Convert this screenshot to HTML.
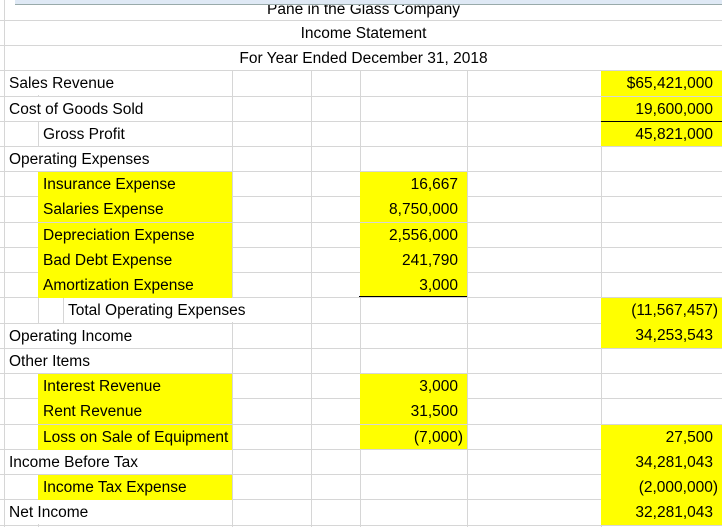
<!DOCTYPE html>
<html><head><meta charset="utf-8"><style>
body{margin:0;width:722px;height:527px;overflow:hidden;background:#fff;position:relative;font-family:"Liberation Sans",Arial,sans-serif;font-size:15.5px;color:#000}
.h{position:absolute;left:0;width:722px;height:1px;background:#d6d6d6}
.v{position:absolute;top:0;height:527px;width:1px;background:#d6d6d6}
.c{position:absolute;height:25px;line-height:25px;white-space:nowrap;box-sizing:border-box}
.w{background:#fff;height:24px}.y{background:#ffff00}
.r{text-align:right}
</style></head><body>
<div class="v" style="left:4px"></div><div class="v" style="left:38px"></div><div class="v" style="left:232px"></div><div class="v" style="left:311px"></div><div class="v" style="left:360px"></div><div class="v" style="left:467px"></div><div class="v" style="left:601px"></div>
<div class="h" style="top:20px"></div><div class="h" style="top:45px"></div><div class="h" style="top:70px"></div><div class="h" style="top:96px"></div><div class="h" style="top:121px"></div><div class="h" style="top:146px"></div><div class="h" style="top:171px"></div><div class="h" style="top:196px"></div><div class="h" style="top:222px"></div><div class="h" style="top:247px"></div><div class="h" style="top:272px"></div><div class="h" style="top:297px"></div><div class="h" style="top:323px"></div><div class="h" style="top:348px"></div><div class="h" style="top:373px"></div><div class="h" style="top:398px"></div><div class="h" style="top:424px"></div><div class="h" style="top:449px"></div><div class="h" style="top:474px"></div><div class="h" style="top:499px"></div><div class="h" style="top:525px"></div>

<div class="c w" style="left:5px;width:717px;top:0;height:20px;line-height:20px;text-align:center;overflow:hidden"><span style="position:relative;top:0px">Pane in the Glass Company</span></div>
<div style="position:absolute;left:15px;top:0;width:707px;height:4px;background:#dfe9f5;border-bottom:1px solid #9aa"></div>
<div class="c w" style="left:5px;width:717px;top:21px;text-align:center">Income Statement</div>
<div class="c w" style="left:5px;width:717px;top:46px;text-align:center">For Year Ended December 31, 2018</div>

<div class="c w" style="left:5px;width:227px;top:71px;padding-left:4px">Sales Revenue</div>
<div class="c w" style="left:5px;width:227px;top:97px;padding-left:4px">Cost of Goods Sold</div>
<div class="c w" style="left:39px;width:193px;top:122px;padding-left:4px">Gross Profit</div>
<div class="c w" style="left:5px;width:227px;top:147px;padding-left:4px">Operating Expenses</div>
<div class="c y" style="left:38px;width:194px;top:172px;padding-left:5px">Insurance Expense</div>
<div class="c y" style="left:38px;width:194px;top:197px;padding-left:5px">Salaries Expense</div>
<div class="c y" style="left:38px;width:194px;top:223px;padding-left:5px">Depreciation Expense</div>
<div class="c y" style="left:38px;width:194px;top:248px;padding-left:5px">Bad Debt Expense</div>
<div class="c y" style="left:38px;width:194px;top:273px;padding-left:5px">Amortization Expense</div>
<div class="v" style="left:63px;top:298px;height:25px"></div>
<div class="c w" style="left:64px;width:246px;top:298px;padding-left:4px">Total Operating Expenses</div>
<div class="c w" style="left:5px;width:227px;top:324px;padding-left:4px">Operating Income</div>
<div class="c w" style="left:5px;width:227px;top:349px;padding-left:4px">Other Items</div>
<div class="c y" style="left:38px;width:194px;top:374px;padding-left:5px">Interest Revenue</div>
<div class="c y" style="left:38px;width:194px;top:399px;padding-left:5px">Rent Revenue</div>
<div class="c y" style="left:38px;width:194px;top:425px;padding-left:5px">Loss on Sale of Equipment</div>
<div class="c w" style="left:5px;width:227px;top:450px;padding-left:4px">Income Before Tax</div>
<div class="c y" style="left:38px;width:194px;top:475px;padding-left:5px">Income Tax Expense</div>
<div class="c w" style="left:5px;width:227px;top:500px;padding-left:4px">Net Income</div>

<div class="c y r" style="left:360px;width:107px;top:172px;padding-right:9px">16,667</div>
<div class="c y r" style="left:360px;width:107px;top:197px;padding-right:9px">8,750,000</div>
<div class="c y r" style="left:360px;width:107px;top:223px;padding-right:9px">2,556,000</div>
<div class="c y r" style="left:360px;width:107px;top:248px;padding-right:9px">241,790</div>
<div class="c y r" style="left:360px;width:107px;top:273px;padding-right:9px;height:24px">3,000</div>
<div style="position:absolute;left:359px;top:296px;width:108px;height:1px;background:#000"></div>
<div class="c y r" style="left:360px;width:107px;top:374px;padding-right:9px">3,000</div>
<div class="c y r" style="left:360px;width:107px;top:399px;padding-right:9px">31,500</div>
<div class="c y r" style="left:360px;width:107px;top:425px;padding-right:4px;height:24px">(7,000)</div>

<div class="c y r" style="left:601px;width:121px;top:71px;padding-right:9px">$65,421,000</div>
<div class="c y r" style="left:601px;width:121px;top:97px;padding-right:9px;height:24px">19,600,000</div>
<div style="position:absolute;left:601px;top:121px;width:121px;height:1px;background:#000"></div>
<div class="c y r" style="left:601px;width:121px;top:122px;padding-right:9px;height:24px">45,821,000</div>
<div class="c y r" style="left:601px;width:121px;top:298px;padding-right:4px">(11,567,457)</div>
<div class="c y r" style="left:601px;width:121px;top:323px;padding-right:9px;height:25px">34,253,543</div>
<div class="c y r" style="left:601px;width:121px;top:425px;padding-right:9px">27,500</div>
<div class="c y r" style="left:601px;width:121px;top:450px;padding-right:9px">34,281,043</div>
<div class="c y r" style="left:601px;width:121px;top:475px;padding-right:4px">(2,000,000)</div>
<div class="c y r" style="left:601px;width:121px;top:500px;padding-right:9px">32,281,043</div>
</body></html>
